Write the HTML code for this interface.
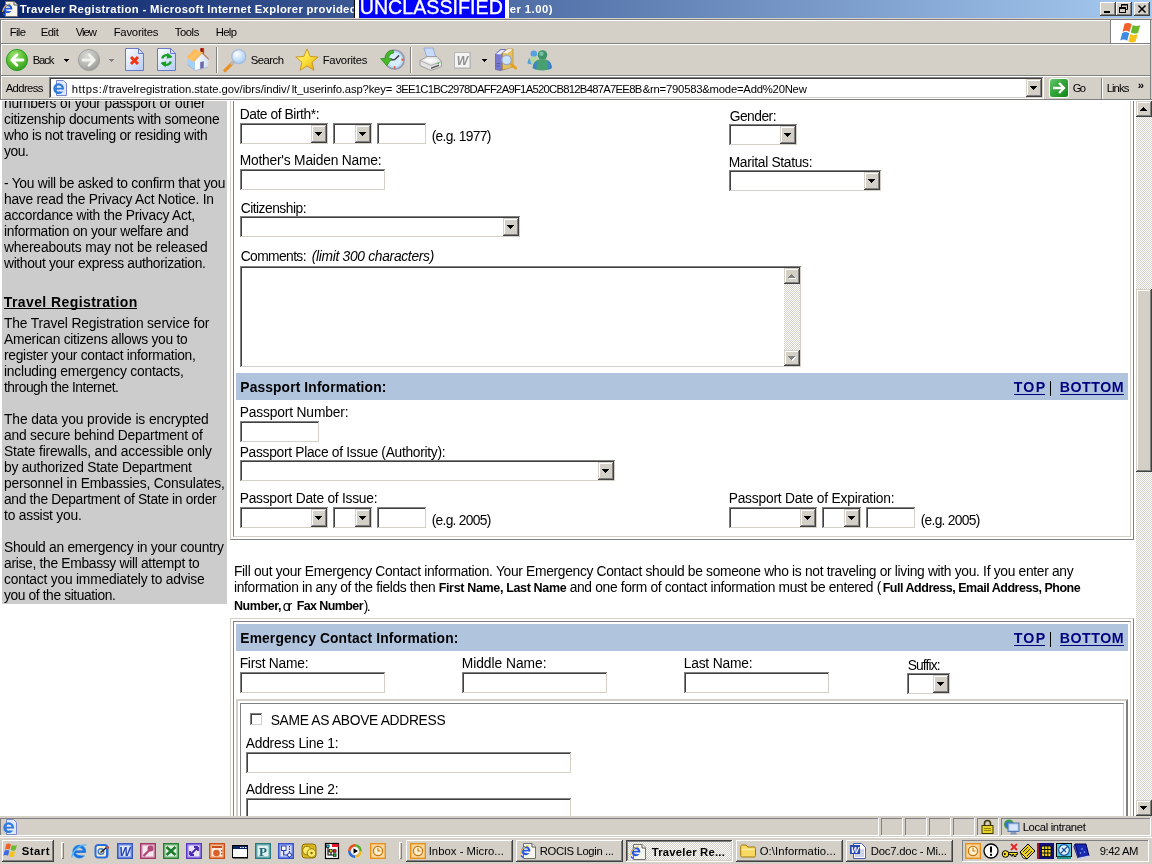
<!DOCTYPE html>
<html>
<head>
<meta charset="utf-8">
<title>Traveler Registration</title>
<style>
*{box-sizing:border-box;margin:0;padding:0}
html,body{width:1152px;height:864px;overflow:hidden;background:#fff}
body{font-family:"Liberation Sans",sans-serif;font-size:13.33px;color:#000;position:relative}
#root{position:absolute;left:0;top:0;width:1152px;height:864px;overflow:hidden;will-change:transform}
.a{position:absolute;display:block}
.t{position:absolute;white-space:nowrap;font-family:"Liberation Sans",sans-serif}
svg{overflow:visible}
.inp{background:#fff;box-shadow:inset -1px -1px 0 #fff,inset 1px 1px 0 #808080,inset -2px -2px 0 #d4d0c8,inset 2px 2px 0 #404040}
.btn{background:#d4d0c8;box-shadow:inset -1px -1px 0 #404040,inset 1px 1px 0 #d4d0c8,inset -2px -2px 0 #808080,inset 2px 2px 0 #fff}
.btnw{background:#d4d0c8;box-shadow:inset -1px -1px 0 #404040,inset 1px 1px 0 #fff,inset -2px -2px 0 #808080,inset 2px 2px 0 #d4d0c8}
.sunk{box-shadow:inset -1px -1px 0 #fff,inset 1px 1px 0 #808080}
.chk{background-color:#fff;background-image:linear-gradient(45deg,#d4d0c8 25%,transparent 25%,transparent 75%,#d4d0c8 75%),linear-gradient(45deg,#d4d0c8 25%,transparent 25%,transparent 75%,#d4d0c8 75%);background-size:2px 2px;background-position:0 0,1px 1px}

</style>
</head>
<body>
<div id="root">
<!-- title bar -->
<div class="a" style="left:0px;top:0px;width:1152px;height:18px;background:linear-gradient(90deg,#0a246a,#a6caf0)"></div>
<svg class="a" style="left:2px;top:1px" width="16" height="16" viewBox="0 0 16 16"><path d="M3.500 .5h8.500l3.500 3.500v11.500h-12z" fill="#f6f6ec" stroke="#707070"/><path d="M12 .5v3.500h3.500" fill="#fff" stroke="#505050"/>
<circle cx="5.800" cy="7.600" r="3.500" fill="none" stroke="#2456e0" stroke-width="2.100"/><rect x="2.300" y="6.800" width="7.500" height="1.700" fill="#2456e0"/><rect x="6.500" y="8.500" width="4" height="1.700" fill="#f6f6ec"/>
<path d="M.6 11c.3-4 3.600-8 8-8.500" fill="none" stroke="#f0c040" stroke-width="1.100"/><path d="M1 12.500l2 2" stroke="#2456e0" stroke-width="1.200"/></svg>
<div class="t" style="left:19.70px;top:1px;font-size:11.3px;line-height:16px;letter-spacing:0.327px;font-weight:bold;color:#fff;">Traveler Registration - Microsoft Internet Explorer provided</div>
<div class="t" style="left:509.70px;top:1px;font-size:11.3px;line-height:16px;letter-spacing:0.456px;font-weight:bold;color:#fff;">er 1.00)</div>
<div class="a" style="left:354px;top:0px;width:155px;height:20px;background:#00f;border-left:1px solid #000;border-bottom:1px solid #000;box-shadow:inset 4px 0 0 #fff,inset -4px 0 0 #fff;overflow:hidden"></div>
<div class="t" style="left:359.70px;top:-3px;font-size:19.6px;line-height:20px;letter-spacing:0.047px;color:#fff;-webkit-text-stroke:.35px #fff">UNCLASSIFIED</div>
<div class="a btnw" style="left:1100px;top:2px;width:16px;height:14px;"></div>
<div class="a btnw" style="left:1116px;top:2px;width:16px;height:14px;"></div>
<div class="a btnw" style="left:1134px;top:2px;width:16px;height:14px;"></div>
<div class="a" style="left:1104px;top:11px;width:6px;height:2px;background:#000"></div>
<svg class="a" style="left:1116px;top:2px" width="16" height="14" viewBox="0 0 16 14"><path d="M5.5 2.5h6v5h-6z M5 3h7 M3.5 5.5h6v5h-6z M3 6h7" fill="none" stroke="#000" stroke-width="1"/><rect x="4" y="6" width="5" height="4" fill="#d4d0c8"/><path d="M3.5 5.5h6v5h-6z M3 6.5h7" fill="none" stroke="#000"/></svg>
<svg class="a" style="left:1134px;top:2px" width="16" height="14" viewBox="0 0 16 14"><path d="M4.5 3.5l7 7 M11.5 3.5l-7 7" stroke="#000" stroke-width="1.5" fill="none"/></svg>
<!-- menu / toolbar / address -->
<div class="a" style="left:0px;top:18px;width:1152px;height:82px;background:#d4d0c8"></div>
<div class="a" style="left:0px;top:19px;width:1px;height:81px;background:#808080"></div>
<div class="a" style="left:1px;top:20px;width:1px;height:79px;background:#fff"></div>
<div class="a" style="left:1150px;top:19px;width:1px;height:81px;background:#808080"></div>
<div class="a" style="left:0px;top:19px;width:1152px;height:1px;background:#808080"></div>
<div class="a" style="left:1px;top:20px;width:1149px;height:1px;background:#fff"></div>
<div class="a" style="left:1px;top:43px;width:1150px;height:1px;background:#808080"></div>
<div class="a" style="left:1px;top:44px;width:1149px;height:1px;background:#fff"></div>
<div class="a" style="left:1px;top:75px;width:1150px;height:1px;background:#808080"></div>
<div class="a" style="left:1px;top:76px;width:1149px;height:1px;background:#fff"></div>
<div class="a" style="left:0px;top:99px;width:1152px;height:1px;background:#808080"></div>
<div class="t" style="left:9.70px;top:24px;font-size:11.3px;line-height:16px;letter-spacing:-0.640px;">File</div>
<div class="t" style="left:40.70px;top:24px;font-size:11.3px;line-height:16px;letter-spacing:-0.443px;">Edit</div>
<div class="t" style="left:75.70px;top:24px;font-size:11.3px;line-height:16px;letter-spacing:-1.041px;">View</div>
<div class="t" style="left:113.70px;top:24px;font-size:11.3px;line-height:16px;letter-spacing:-0.226px;">Favorites</div>
<div class="t" style="left:174.70px;top:24px;font-size:11.3px;line-height:16px;letter-spacing:-0.431px;">Tools</div>
<div class="t" style="left:215.70px;top:24px;font-size:11.3px;line-height:16px;letter-spacing:-0.650px;">Help</div>
<div class="a" style="left:1110px;top:20px;width:1px;height:24px;background:#808080"></div>
<div class="a" style="left:1111px;top:20px;width:39px;height:23px;background:#fff"></div>
<svg class="a" style="left:1121px;top:22px" width="21" height="20" viewBox="0 0 19 18"><path d="M3.2 1.6c2.2-1.3 4.6-.9 6.4.4l-1.9 7c-1.9-1.3-4-1.5-6.3-.3z" fill="#f0622a"/>
<path d="M10.6 2.6c2 1.2 4.300 1.500 6.800.000l-1.900 7.000c-2.400 1.300-4.700 1.000-6.700-.200z" fill="#6cb82c"/>
<path d="M1.100 9.800c2.200-1.200 4.400-.900 6.300.300l-1.800 6.800c-1.900-1.300-4.100-1.500-6.300-.300z" fill="#3d8be0"/>
<path d="M8.500 10.800c2.000 1.200 4.200 1.400 6.600.100l-1.800 6.800c-2.300 1.200-4.600 1.000-6.600-.200z" fill="#f7c21a"/></svg>
<!-- toolbar -->
<svg class="a" style="left:6px;top:49px" width="22" height="22" viewBox="0 0 22 22"><defs><radialGradient id="gb" cx=".4" cy=".3" r=".8"><stop offset="0" stop-color="#a4e478"/><stop offset=".55" stop-color="#58bc30"/><stop offset="1" stop-color="#2c9420"/></radialGradient>
<radialGradient id="gf" cx=".4" cy=".3" r=".8"><stop offset="0" stop-color="#d8d8d4"/><stop offset=".6" stop-color="#b4b4b0"/><stop offset="1" stop-color="#8e8e8a"/></radialGradient></defs>
<circle cx="11" cy="11" r="10.6" fill="url(#gb)" stroke="#1c9c1c" stroke-width=".9"/>
<path d="M17 11H6.500M11 5.800L5.800 11l5.200 5.200" fill="none" stroke="#fff" stroke-width="2.800" stroke-linecap="round" stroke-linejoin="round"/></svg>
<div class="t" style="left:32.70px;top:52px;font-size:11.3px;line-height:16px;letter-spacing:-1.155px;">Back</div>
<div class="a" style="left:64px;top:59px;width:5px;height:1px;background:#000"></div>
<div class="a" style="left:65px;top:60px;width:3px;height:1px;background:#000"></div>
<div class="a" style="left:66px;top:61px;width:1px;height:1px;background:#000"></div>
<svg class="a" style="left:78px;top:49px" width="22" height="22" viewBox="0 0 22 22"><circle cx="11" cy="11" r="10.6" fill="url(#gf)" stroke="#98989a" stroke-width=".8"/>
<path d="M5 11h10.500M11 5.800l5.200 5.200-5.200 5.200" fill="none" stroke="#f2f2ee" stroke-width="2.800" stroke-linecap="round" stroke-linejoin="round"/></svg>
<div class="a" style="left:109px;top:59px;width:5px;height:1px;background:#808080"></div>
<div class="a" style="left:110px;top:60px;width:3px;height:1px;background:#808080"></div>
<div class="a" style="left:111px;top:61px;width:1px;height:1px;background:#808080"></div>
<svg class="a" style="left:125px;top:48px" width="19" height="23" viewBox="0 0 19 23"><defs><linearGradient id="pg" x1="0" y1="0" x2="1" y2="1"><stop offset="0" stop-color="#fff"/><stop offset="1" stop-color="#b4ccf4"/></linearGradient></defs>
<path d="M.5 .5h13l5 5v17h-18z" fill="url(#pg)" stroke="#6a78c8" stroke-width="1"/><path d="M13.500 .5v5h5z" fill="#d8e4fb" stroke="#6a78c8" stroke-width="1"/><path d="M6 9l7 7M13 9l-7 7" stroke="#f03410" stroke-width="3" fill="none"/></svg>
<svg class="a" style="left:157px;top:48px" width="19" height="23" viewBox="0 0 19 23"><path d="M.5 .5h13l5 5v17h-18z" fill="url(#pg)" stroke="#6a78c8" stroke-width="1"/><path d="M13.500 .5v5h5z" fill="#d8e4fb" stroke="#6a78c8" stroke-width="1"/>
<path d="M13.800 9.800A4.600 4.600 0 0 0 5.200 10.500" fill="none" stroke="#18a028" stroke-width="2.400"/><path d="M10.500 4.800l4.800 4.200-5.600 1.800z" fill="#18a028"/>
<path d="M5.200 14.200a4.600 4.600 0 0 0 8.600-.7" fill="none" stroke="#18a028" stroke-width="2.400"/><path d="M8.500 19.200l-4.800-4.200 5.600-1.800z" fill="#18a028"/></svg>
<svg class="a" style="left:184px;top:45px" width="30" height="28" viewBox="0 0 30 28"><defs><linearGradient id="rf" x1="0" y1="0" x2="1" y2="1"><stop offset="0" stop-color="#ffa63c"/><stop offset=".5" stop-color="#ffc468"/><stop offset="1" stop-color="#ff9a28"/></linearGradient>
<linearGradient id="fw" x1="0" y1="0" x2="1" y2="0"><stop offset="0" stop-color="#fff"/><stop offset="1" stop-color="#cfe2f4"/></linearGradient></defs>
<rect x="16.400" y="3" width="3.700" height="6" rx=".8" fill="#c03414"/><rect x="16.600" y="3.200" width="1.600" height="4" fill="#900808"/>
<path d="M3 12.800l6.200 4 2 -.3.200 9-8.200-6z" fill="#a4d0f8"/>
<path d="M11 16.500l7.500-8 5.900 5.600-.3 8-12.800 3.500z" fill="url(#fw)"/>
<path d="M18.700 7.600l6.500 6.300-.8.900-6.200-6z" fill="#b87a58"/>
<path d="M2.500 12.300l8-8.100 8.700 3.400-10 9.200z" fill="url(#rf)"/>
<path d="M16.200 17l3.600-.7v6.700l-3.600 1z" fill="#6c6cac"/>
<path d="M3.200 19.600l8.100 6 12.800-3.500" fill="none" stroke="#9aa8d8" stroke-width=".7"/></svg>
<div class="a" style="left:216px;top:47px;width:1px;height:26px;background:#808080"></div>
<div class="a" style="left:217px;top:47px;width:1px;height:26px;background:#fff"></div>
<svg class="a" style="left:222px;top:48px" width="26" height="24" viewBox="0 0 26 24"><path d="M11 14.500L3 22.500" stroke="#e8922c" stroke-width="3.400" stroke-linecap="round"/><path d="M11.500 14L9 16.500" stroke="#b8b8c0" stroke-width="3"/>
<defs><radialGradient id="gl" cx=".35" cy=".3" r=".8"><stop offset="0" stop-color="#fff"/><stop offset="1" stop-color="#9cc8f4"/></radialGradient></defs>
<circle cx="16.800" cy="8.600" r="7" fill="url(#gl)" stroke="#a4b8dc" stroke-width="1.300"/></svg>
<div class="t" style="left:250.70px;top:52px;font-size:11.3px;line-height:16px;letter-spacing:-0.502px;">Search</div>
<svg class="a" style="left:295px;top:48px" width="24" height="23" viewBox="0 0 24 23"><defs><linearGradient id="st" x1="0" y1="0" x2="1" y2="1"><stop offset="0" stop-color="#fff8a0"/><stop offset=".5" stop-color="#fbe23a"/><stop offset="1" stop-color="#e0a010"/></linearGradient></defs>
<path d="M12 .8l3.100 7.600 8.100.6-6.200 5.300 2 8-7-4.400-7 4.400 2-8L.8 9l8.100-.6z" fill="url(#st)" stroke="#c89418" stroke-width=".9" stroke-linejoin="round"/></svg>
<div class="t" style="left:322.70px;top:52px;font-size:11.3px;line-height:16px;letter-spacing:-0.226px;">Favorites</div>
<svg class="a" style="left:380px;top:48px" width="26" height="23" viewBox="0 0 26 23"><circle cx="14.600" cy="11.700" r="9.400" fill="#d8eefc" stroke="#9a9ab4" stroke-width="2"/><circle cx="14.600" cy="11.700" r="7.600" fill="none" stroke="#b8e0f8" stroke-width="1.500"/>
<path d="M14.600 11.700l4.500-4.300M14.600 11.700h-4" stroke="#404048" stroke-width="1.500" fill="none"/><rect x="21.500" y="10.700" width="1.800" height="2" fill="#e85020"/><rect x="13.700" y="18.300" width="1.800" height="2" fill="#e85020"/>
<path d="M13.500 2.200C8 2 5 6.500 5.500 10.500H.5l6.200 7.200 5.300-7.200H8.800c0-3 1.700-5.300 4.700-5.300z" fill="#48b828" stroke="#2a8a1a" stroke-width=".7"/></svg>
<div class="a" style="left:410px;top:47px;width:1px;height:26px;background:#808080"></div>
<div class="a" style="left:411px;top:47px;width:1px;height:26px;background:#fff"></div>
<svg class="a" style="left:419px;top:47px" width="23" height="24" viewBox="0 0 23 24"><path d="M5 1h9l3 10H8z" fill="#c8dcfa" stroke="#8aa0d8" stroke-width=".8"/><path d="M1 13.500l7-4h10l4.500 5v5L12 23.500 1 18.500z" fill="#e4e4e4" stroke="#909090" stroke-width=".8"/>
<path d="M1 13.500l11 5 10.500-4" fill="none" stroke="#a0a0a0" stroke-width=".8"/><path d="M7 11.500h9l2.500 2.500-6.500 2.500-7-3z" fill="#f8f8f8"/><path d="M12 20.500l8-3v1.500l-8 3z" fill="#505050"/><rect x="18.500" y="15.800" width="1.500" height="1.200" fill="#38c030"/></svg>
<div class="a" style="left:454px;top:52px;width:17px;height:17px;background:#f4f4f4;border:1px solid #b8b8b8;box-shadow:inset -1px -1px 0 #d0d0d0"></div>
<div class="t" style="left:456.70px;top:53px;font-size:12px;line-height:16px;font-weight:bold;font-style:italic;color:#909090;">W</div>
<div class="a" style="left:482px;top:59px;width:5px;height:1px;background:#000"></div>
<div class="a" style="left:483px;top:60px;width:3px;height:1px;background:#000"></div>
<div class="a" style="left:484px;top:61px;width:1px;height:1px;background:#000"></div>
<svg class="a" style="left:495px;top:48px" width="22" height="23" viewBox="0 0 22 23"><path d="M0.500 6l5-4.500 5 0V21l-5 1.500-5-1z" fill="#7878d0" stroke="#5050a0" stroke-width=".6"/><path d="M1 6l5-4h4l-4.500 4.500z" fill="#e8e8f8"/><path d="M1.500 18h3.500M1.500 15.500h3.500" stroke="#5050a0" stroke-width=".8"/>
<path d="M7.500 5l5-4h5.500V19l-10.500 3z" fill="#e4c060" stroke="#a88830" stroke-width=".6"/><path d="M8 5l5-3.700 4.500 0-5 4z" fill="#f4f4f4"/>
<path d="M15 15l5.500 5" stroke="#e8a020" stroke-width="3" stroke-linecap="round"/><circle cx="11.600" cy="12" r="4.700" fill="#c8e4fa" stroke="#a0a8c0" stroke-width="1.300"/></svg>
<svg class="a" style="left:527px;top:49px" width="25" height="22" viewBox="0 0 25 22"><circle cx="6.800" cy="4.800" r="3.300" fill="#5aa0e0"/><path d="M.5 14.500c.5-5 3-7 6.300-7s5.500 2 6 7c-3 1.800-9 1.800-12.300 0z" fill="#b8d4a0"/><path d="M.5 14.500c.2-3 1-4.500 2-5.500l2 6.500z" fill="#5aa0e0"/>
<circle cx="15.500" cy="6" r="4.800" fill="#3c9468"/><circle cx="14.500" cy="4.800" r="2.200" fill="#78c0a0"/><path d="M5.500 19c.5-6 4.500-9 10-9s9 3 9.500 9c-4 3.300-15 3.300-19.500 0z" fill="#48a070"/><path d="M21 11.500c2.200 1.500 3.500 4 3.800 7.500l-3.500 1.700z" fill="#3c80d0"/><path d="M10 11.500c-2.200 1.500-3.800 4-4.200 7.500l3.500 1.700z" fill="#3c80d0"/></svg>
<!-- address bar -->
<div class="t" style="left:5.70px;top:80px;font-size:11.3px;line-height:16px;letter-spacing:-0.632px;">Address</div>
<div class="a inp" style="left:49px;top:77px;width:995px;height:22px;"></div>
<svg class="a" style="left:52px;top:80px" width="16" height="16" viewBox="0 0 16 16"><path d="M4.500 .5h7l3 3v12h-10z" fill="#dfe7fb" stroke="#7a86c8" stroke-width="1"/>
<circle cx="6.600" cy="8.600" r="4.200" fill="none" stroke="#2a7ae0" stroke-width="2.300"/><rect x="3" y="7.800" width="8.500" height="1.800" fill="#2a7ae0"/><rect x="8" y="9.600" width="4" height="2" fill="#dfe7fb"/></svg>
<div class="t" style="left:71.70px;top:81px;font-size:11.3px;line-height:16px;letter-spacing:0.502px;">https:</div>
<div class="t" style="left:102.70px;top:81px;font-size:11.3px;line-height:16px;letter-spacing:-1.139px;">//</div>
<div class="t" style="left:108.70px;top:81px;font-size:11.3px;line-height:16px;letter-spacing:-0.057px;">travelregistration.state.gov/ibrs/indiv/</div>
<div class="t" style="left:291.70px;top:81px;font-size:11.3px;line-height:16px;letter-spacing:-0.176px;">lt_userinfo.asp?key=</div>
<div class="t" style="left:395.70px;top:81px;font-size:11.3px;line-height:16px;letter-spacing:-0.748px;">3EE1C1BC2978DAFF2A9F1A520CB812B487A7EE8B</div>
<div class="t" style="left:642.70px;top:81px;font-size:11.3px;line-height:16px;letter-spacing:-0.226px;">&amp;rn=790583&amp;mode=Add%20New</div>
<div class="a btn" style="left:1026px;top:79px;width:16px;height:18px;"></div>
<div class="a" style="left:1030px;top:86px;width:7px;height:1px;background:#000"></div>
<div class="a" style="left:1031px;top:87px;width:5px;height:1px;background:#000"></div>
<div class="a" style="left:1032px;top:88px;width:3px;height:1px;background:#000"></div>
<div class="a" style="left:1033px;top:89px;width:1px;height:1px;background:#000"></div>
<svg class="a" style="left:1049px;top:78px" width="20" height="20" viewBox="0 0 20 20"><defs><linearGradient id="go" x1="0" y1="0" x2="1" y2="1"><stop offset="0" stop-color="#6cc870"/><stop offset=".4" stop-color="#38a840"/><stop offset="1" stop-color="#108818"/></linearGradient></defs>
<rect x="0" y="0" width="20" height="20" rx="3" fill="#f4f8f0"/><rect x="1" y="1" width="18" height="18" rx="2.500" fill="url(#go)"/><path d="M4 10h10.500M10 5l5 5-5 5" fill="none" stroke="#fff" stroke-width="2.300"/></svg>
<div class="t" style="left:1072.70px;top:80px;font-size:11.3px;line-height:16px;letter-spacing:-1.787px;">Go</div>
<div class="a" style="left:1101px;top:78px;width:1px;height:21px;background:#808080"></div>
<div class="a" style="left:1102px;top:78px;width:1px;height:21px;background:#fff"></div>
<div class="t" style="left:1106.70px;top:80px;font-size:11.3px;line-height:16px;letter-spacing:-0.931px;">Links</div>
<div class="t" style="left:1137.70px;top:77px;font-size:11.3px;line-height:16px;font-weight:bold;">»</div>
<!-- page viewport -->
<div class="a" style="left:0;top:101px;width:1136px;height:715px;overflow:hidden;background:#fff"><div class="a" style="left:0;top:-101px;width:1136px;height:900px">
<div class="a" style="left:2px;top:101px;width:225px;height:503px;background:#ccc"></div>
<div class="t" style="left:4.00px;top:96px;font-size:13.8px;line-height:16px;letter-spacing:-0.195px;">numbers of your passport or other</div>
<div class="t" style="left:4.00px;top:112px;font-size:13.8px;line-height:16px;letter-spacing:-0.273px;">citizenship documents with someone</div>
<div class="t" style="left:4.00px;top:128px;font-size:13.8px;line-height:16px;letter-spacing:-0.307px;">who is not traveling or residing with</div>
<div class="t" style="left:4.00px;top:144px;font-size:13.8px;line-height:16px;letter-spacing:-0.415px;">you.</div>
<div class="t" style="left:4.00px;top:176px;font-size:13.8px;line-height:16px;letter-spacing:-0.268px;">- You will be asked to confirm that you</div>
<div class="t" style="left:4.00px;top:192px;font-size:13.8px;line-height:16px;letter-spacing:-0.247px;">have read the Privacy Act Notice. In</div>
<div class="t" style="left:4.00px;top:208px;font-size:13.8px;line-height:16px;letter-spacing:-0.243px;">accordance with the Privacy Act,</div>
<div class="t" style="left:4.00px;top:224px;font-size:13.8px;line-height:16px;letter-spacing:-0.286px;">information on your welfare and</div>
<div class="t" style="left:4.00px;top:240px;font-size:13.8px;line-height:16px;letter-spacing:-0.139px;">whereabouts may not be released</div>
<div class="t" style="left:4.00px;top:256px;font-size:13.8px;line-height:16px;letter-spacing:-0.334px;">without your express authorization.</div>
<div class="t" style="left:4.00px;top:316px;font-size:13.8px;line-height:16px;letter-spacing:-0.140px;">The Travel Registration service for</div>
<div class="t" style="left:4.00px;top:332px;font-size:13.8px;line-height:16px;letter-spacing:-0.268px;">American citizens allows you to</div>
<div class="t" style="left:4.00px;top:348px;font-size:13.8px;line-height:16px;letter-spacing:-0.275px;">register your contact information,</div>
<div class="t" style="left:4.00px;top:364px;font-size:13.8px;line-height:16px;letter-spacing:-0.206px;">including emergency contacts,</div>
<div class="t" style="left:4.00px;top:380px;font-size:13.8px;line-height:16px;letter-spacing:-0.471px;">through the Internet.</div>
<div class="t" style="left:4.00px;top:412px;font-size:13.8px;line-height:16px;letter-spacing:-0.099px;">The data you provide is encrypted</div>
<div class="t" style="left:4.00px;top:428px;font-size:13.8px;line-height:16px;letter-spacing:-0.198px;">and secure behind Department of</div>
<div class="t" style="left:4.00px;top:444px;font-size:13.8px;line-height:16px;letter-spacing:-0.173px;">State firewalls, and accessible only</div>
<div class="t" style="left:4.00px;top:460px;font-size:13.8px;line-height:16px;letter-spacing:-0.240px;">by authorized State Department</div>
<div class="t" style="left:4.00px;top:476px;font-size:13.8px;line-height:16px;letter-spacing:-0.181px;">personnel in Embassies, Consulates,</div>
<div class="t" style="left:4.00px;top:492px;font-size:13.8px;line-height:16px;letter-spacing:-0.324px;">and the Department of State in order</div>
<div class="t" style="left:4.00px;top:508px;font-size:13.8px;line-height:16px;letter-spacing:-0.207px;">to assist you.</div>
<div class="t" style="left:4.00px;top:540px;font-size:13.8px;line-height:16px;letter-spacing:-0.254px;">Should an emergency in your country</div>
<div class="t" style="left:4.00px;top:556px;font-size:13.8px;line-height:16px;letter-spacing:-0.298px;">arise, the Embassy will attempt to</div>
<div class="t" style="left:4.00px;top:572px;font-size:13.8px;line-height:16px;letter-spacing:-0.199px;">contact you immediately to advise</div>
<div class="t" style="left:4.00px;top:588px;font-size:13.8px;line-height:16px;letter-spacing:-0.391px;">you of the situation.</div>
<div class="t" style="left:3.70px;top:293px;font-size:14px;line-height:18px;letter-spacing:0.417px;font-weight:bold;">Travel Registration</div>
<div class="a" style="left:4px;top:308px;width:133px;height:1px;background:#000"></div>
<div class="a" style="left:230px;top:60px;width:904px;height:480px;border:1px solid;border-color:#d4d0c8 #808080 #808080 #d4d0c8"></div>
<div class="a" style="left:233px;top:63px;width:898px;height:474px;border:1px solid;border-color:#808080 #d4d0c8 #d4d0c8 #808080"></div>
<div class="t" style="left:239.70px;top:107px;font-size:13.8px;line-height:16px;letter-spacing:-0.432px;">Date of Birth*:</div>
<div class="a inp" style="left:240px;top:123px;width:89px;height:22px;"></div>
<div class="a btn" style="left:311px;top:125px;width:16px;height:18px;"></div>
<div class="a" style="left:315px;top:132px;width:7px;height:1px;background:#000"></div>
<div class="a" style="left:316px;top:133px;width:5px;height:1px;background:#000"></div>
<div class="a" style="left:317px;top:134px;width:3px;height:1px;background:#000"></div>
<div class="a" style="left:318px;top:135px;width:1px;height:1px;background:#000"></div>
<div class="a inp" style="left:333px;top:123px;width:40px;height:22px;"></div>
<div class="a btn" style="left:355px;top:125px;width:16px;height:18px;"></div>
<div class="a" style="left:359px;top:132px;width:7px;height:1px;background:#000"></div>
<div class="a" style="left:360px;top:133px;width:5px;height:1px;background:#000"></div>
<div class="a" style="left:361px;top:134px;width:3px;height:1px;background:#000"></div>
<div class="a" style="left:362px;top:135px;width:1px;height:1px;background:#000"></div>
<div class="a inp" style="left:377px;top:123px;width:50px;height:22px;"></div>
<div class="t" style="left:431.70px;top:129px;font-size:13.8px;line-height:16px;letter-spacing:-0.713px;">(e.g. 1977)</div>
<div class="t" style="left:729.70px;top:109px;font-size:13.8px;line-height:16px;letter-spacing:-0.503px;">Gender:</div>
<div class="a inp" style="left:729px;top:124px;width:69px;height:22px;"></div>
<div class="a btn" style="left:780px;top:126px;width:16px;height:18px;"></div>
<div class="a" style="left:784px;top:133px;width:7px;height:1px;background:#000"></div>
<div class="a" style="left:785px;top:134px;width:5px;height:1px;background:#000"></div>
<div class="a" style="left:786px;top:135px;width:3px;height:1px;background:#000"></div>
<div class="a" style="left:787px;top:136px;width:1px;height:1px;background:#000"></div>
<div class="t" style="left:239.70px;top:153px;font-size:13.8px;line-height:16px;letter-spacing:-0.210px;">Mother&#x27;s Maiden Name:</div>
<div class="a inp" style="left:240px;top:169px;width:146px;height:22px;"></div>
<div class="t" style="left:728.70px;top:155px;font-size:13.8px;line-height:16px;letter-spacing:-0.310px;">Marital Status:</div>
<div class="a inp" style="left:729px;top:170px;width:153px;height:22px;"></div>
<div class="a btn" style="left:864px;top:172px;width:16px;height:18px;"></div>
<div class="a" style="left:868px;top:179px;width:7px;height:1px;background:#000"></div>
<div class="a" style="left:869px;top:180px;width:5px;height:1px;background:#000"></div>
<div class="a" style="left:870px;top:181px;width:3px;height:1px;background:#000"></div>
<div class="a" style="left:871px;top:182px;width:1px;height:1px;background:#000"></div>
<div class="t" style="left:240.70px;top:201px;font-size:13.8px;line-height:16px;letter-spacing:-0.498px;">Citizenship:</div>
<div class="a inp" style="left:240px;top:216px;width:281px;height:22px;"></div>
<div class="a btn" style="left:503px;top:218px;width:16px;height:18px;"></div>
<div class="a" style="left:507px;top:225px;width:7px;height:1px;background:#000"></div>
<div class="a" style="left:508px;top:226px;width:5px;height:1px;background:#000"></div>
<div class="a" style="left:509px;top:227px;width:3px;height:1px;background:#000"></div>
<div class="a" style="left:510px;top:228px;width:1px;height:1px;background:#000"></div>
<div class="t" style="left:240.70px;top:249px;font-size:13.8px;line-height:16px;letter-spacing:-0.588px;">Comments:</div>
<div class="t" style="left:311.70px;top:249px;font-size:13.8px;line-height:16px;letter-spacing:-0.296px;font-style:italic;">(limit 300 characters)</div>
<div class="a inp" style="left:240px;top:266px;width:562px;height:102px;"></div>
<div class="a chk" style="left:784px;top:268px;width:16px;height:98px;"></div>
<div class="a btn" style="left:784px;top:268px;width:16px;height:16px;"></div>
<div class="a btn" style="left:784px;top:350px;width:16px;height:16px;"></div>
<div class="a" style="left:789px;top:278px;width:7px;height:1px;background:#fff"></div>
<div class="a" style="left:790px;top:277px;width:5px;height:1px;background:#fff"></div>
<div class="a" style="left:791px;top:276px;width:3px;height:1px;background:#fff"></div>
<div class="a" style="left:792px;top:275px;width:1px;height:1px;background:#fff"></div>
<div class="a" style="left:788px;top:277px;width:7px;height:1px;background:#808080"></div>
<div class="a" style="left:789px;top:276px;width:5px;height:1px;background:#808080"></div>
<div class="a" style="left:790px;top:275px;width:3px;height:1px;background:#808080"></div>
<div class="a" style="left:791px;top:274px;width:1px;height:1px;background:#808080"></div>
<div class="a" style="left:789px;top:357px;width:7px;height:1px;background:#fff"></div>
<div class="a" style="left:790px;top:358px;width:5px;height:1px;background:#fff"></div>
<div class="a" style="left:791px;top:359px;width:3px;height:1px;background:#fff"></div>
<div class="a" style="left:792px;top:360px;width:1px;height:1px;background:#fff"></div>
<div class="a" style="left:788px;top:356px;width:7px;height:1px;background:#808080"></div>
<div class="a" style="left:789px;top:357px;width:5px;height:1px;background:#808080"></div>
<div class="a" style="left:790px;top:358px;width:3px;height:1px;background:#808080"></div>
<div class="a" style="left:791px;top:359px;width:1px;height:1px;background:#808080"></div>
<div class="a" style="left:236px;top:373px;width:892px;height:27px;background:#b0c4de"></div>
<div class="t" style="left:240.30px;top:380px;font-size:13.8px;line-height:16px;letter-spacing:0.132px;font-weight:bold;">Passport Information:</div>
<div class="t" style="left:1013.70px;top:379px;font-size:14.2px;line-height:16px;letter-spacing:1.277px;font-weight:bold;color:#000080;">TOP</div>
<div class="a" style="left:1014px;top:394px;width:31px;height:1px;background:#000080"></div>
<div class="a" style="left:1050px;top:381px;width:1px;height:15px;background:#000"></div>
<div class="t" style="left:1059.70px;top:379px;font-size:14.2px;line-height:16px;letter-spacing:0.521px;font-weight:bold;color:#000080;">BOTTOM</div>
<div class="a" style="left:1060px;top:394px;width:64px;height:1px;background:#000080"></div>
<div class="t" style="left:239.70px;top:405px;font-size:13.8px;line-height:16px;letter-spacing:-0.157px;">Passport Number:</div>
<div class="a inp" style="left:240px;top:421px;width:80px;height:22px;"></div>
<div class="t" style="left:239.70px;top:445px;font-size:13.8px;line-height:16px;letter-spacing:-0.297px;">Passport Place of Issue (Authority):</div>
<div class="a inp" style="left:240px;top:460px;width:376px;height:22px;"></div>
<div class="a btn" style="left:598px;top:462px;width:16px;height:18px;"></div>
<div class="a" style="left:602px;top:469px;width:7px;height:1px;background:#000"></div>
<div class="a" style="left:603px;top:470px;width:5px;height:1px;background:#000"></div>
<div class="a" style="left:604px;top:471px;width:3px;height:1px;background:#000"></div>
<div class="a" style="left:605px;top:472px;width:1px;height:1px;background:#000"></div>
<div class="t" style="left:239.70px;top:491px;font-size:13.8px;line-height:16px;letter-spacing:-0.253px;">Passport Date of Issue:</div>
<div class="a inp" style="left:240px;top:507px;width:89px;height:22px;"></div>
<div class="a btn" style="left:311px;top:509px;width:16px;height:18px;"></div>
<div class="a" style="left:315px;top:516px;width:7px;height:1px;background:#000"></div>
<div class="a" style="left:316px;top:517px;width:5px;height:1px;background:#000"></div>
<div class="a" style="left:317px;top:518px;width:3px;height:1px;background:#000"></div>
<div class="a" style="left:318px;top:519px;width:1px;height:1px;background:#000"></div>
<div class="a inp" style="left:333px;top:507px;width:40px;height:22px;"></div>
<div class="a btn" style="left:355px;top:509px;width:16px;height:18px;"></div>
<div class="a" style="left:359px;top:516px;width:7px;height:1px;background:#000"></div>
<div class="a" style="left:360px;top:517px;width:5px;height:1px;background:#000"></div>
<div class="a" style="left:361px;top:518px;width:3px;height:1px;background:#000"></div>
<div class="a" style="left:362px;top:519px;width:1px;height:1px;background:#000"></div>
<div class="a inp" style="left:377px;top:507px;width:50px;height:22px;"></div>
<div class="t" style="left:431.70px;top:513px;font-size:13.8px;line-height:16px;letter-spacing:-0.713px;">(e.g. 2005)</div>
<div class="t" style="left:728.70px;top:491px;font-size:13.8px;line-height:16px;letter-spacing:-0.220px;">Passport Date of Expiration:</div>
<div class="a inp" style="left:729px;top:507px;width:89px;height:22px;"></div>
<div class="a btn" style="left:800px;top:509px;width:16px;height:18px;"></div>
<div class="a" style="left:804px;top:516px;width:7px;height:1px;background:#000"></div>
<div class="a" style="left:805px;top:517px;width:5px;height:1px;background:#000"></div>
<div class="a" style="left:806px;top:518px;width:3px;height:1px;background:#000"></div>
<div class="a" style="left:807px;top:519px;width:1px;height:1px;background:#000"></div>
<div class="a inp" style="left:822px;top:507px;width:40px;height:22px;"></div>
<div class="a btn" style="left:844px;top:509px;width:16px;height:18px;"></div>
<div class="a" style="left:848px;top:516px;width:7px;height:1px;background:#000"></div>
<div class="a" style="left:849px;top:517px;width:5px;height:1px;background:#000"></div>
<div class="a" style="left:850px;top:518px;width:3px;height:1px;background:#000"></div>
<div class="a" style="left:851px;top:519px;width:1px;height:1px;background:#000"></div>
<div class="a inp" style="left:866px;top:507px;width:50px;height:22px;"></div>
<div class="t" style="left:920.70px;top:513px;font-size:13.8px;line-height:16px;letter-spacing:-0.713px;">(e.g. 2005)</div>
<div class="t" style="left:234.00px;top:564px;font-size:13.8px;line-height:16px;letter-spacing:-0.309px;">Fill out your Emergency Contact information. Your Emergency Contact should be someone who is not traveling or living with you. If you enter any</div>
<div class="t" style="left:234.00px;top:580px;font-size:13.8px;line-height:16px;letter-spacing:-0.342px;">information in any of the fields then</div>
<div class="t" style="left:438.70px;top:580px;font-size:12.5px;line-height:16px;letter-spacing:-0.341px;font-weight:bold;">First Name, Last Name</div>
<div class="t" style="left:569.70px;top:580px;font-size:13.8px;line-height:16px;letter-spacing:-0.335px;">and one form of contact information must be entered (</div>
<div class="t" style="left:882.70px;top:580px;font-size:12.5px;line-height:16px;letter-spacing:-0.475px;font-weight:bold;">Full Address, Email Address, Phone</div>
<div class="t" style="left:234.00px;top:598px;font-size:12.5px;line-height:16px;letter-spacing:-0.423px;font-weight:bold;">Number,</div>
<div class="t" style="left:282.70px;top:599px;font-size:13.8px;line-height:16px;letter-spacing:-2.673px;">or</div>
<div class="t" style="left:296.70px;top:598px;font-size:12.5px;line-height:16px;letter-spacing:-0.597px;font-weight:bold;">Fax Number</div>
<div class="t" style="left:363.70px;top:599px;font-size:13.8px;line-height:16px;letter-spacing:-1.594px;">).</div>
<div class="a" style="left:230px;top:618px;width:904px;height:300px;border:1px solid;border-color:#d4d0c8 #808080 #808080 #d4d0c8"></div>
<div class="a" style="left:233px;top:621px;width:898px;height:290px;border:1px solid;border-color:#808080 #d4d0c8 #d4d0c8 #808080"></div>
<div class="a" style="left:236px;top:624px;width:892px;height:27px;background:#b0c4de"></div>
<div class="t" style="left:240.30px;top:631px;font-size:13.8px;line-height:16px;letter-spacing:0.142px;font-weight:bold;">Emergency Contact Information:</div>
<div class="t" style="left:1013.70px;top:630px;font-size:14.2px;line-height:16px;letter-spacing:1.277px;font-weight:bold;color:#000080;">TOP</div>
<div class="a" style="left:1014px;top:645px;width:31px;height:1px;background:#000080"></div>
<div class="a" style="left:1050px;top:632px;width:1px;height:15px;background:#000"></div>
<div class="t" style="left:1059.70px;top:630px;font-size:14.2px;line-height:16px;letter-spacing:0.521px;font-weight:bold;color:#000080;">BOTTOM</div>
<div class="a" style="left:1060px;top:645px;width:64px;height:1px;background:#000080"></div>
<div class="t" style="left:239.70px;top:656px;font-size:13.8px;line-height:16px;letter-spacing:-0.246px;">First Name:</div>
<div class="t" style="left:461.70px;top:656px;font-size:13.8px;line-height:16px;letter-spacing:-0.025px;">Middle Name:</div>
<div class="t" style="left:683.70px;top:656px;font-size:13.8px;line-height:16px;letter-spacing:-0.190px;">Last Name:</div>
<div class="t" style="left:907.70px;top:658px;font-size:13.8px;line-height:16px;letter-spacing:-0.876px;">Suffix:</div>
<div class="a inp" style="left:240px;top:672px;width:146px;height:22px;"></div>
<div class="a inp" style="left:462px;top:672px;width:146px;height:22px;"></div>
<div class="a inp" style="left:684px;top:672px;width:146px;height:22px;"></div>
<div class="a inp" style="left:907px;top:673px;width:44px;height:22px;"></div>
<div class="a btn" style="left:933px;top:675px;width:16px;height:18px;"></div>
<div class="a" style="left:937px;top:682px;width:7px;height:1px;background:#000"></div>
<div class="a" style="left:938px;top:683px;width:5px;height:1px;background:#000"></div>
<div class="a" style="left:939px;top:684px;width:3px;height:1px;background:#000"></div>
<div class="a" style="left:940px;top:685px;width:1px;height:1px;background:#000"></div>
<div class="a" style="left:236px;top:699px;width:892px;height:200px;border:2px solid;border-color:#d4d0c8 #808080 #808080 #d4d0c8"></div>
<div class="a" style="left:240px;top:703px;width:884px;height:190px;border:1px solid;border-color:#808080 #d4d0c8 #d4d0c8 #808080"></div>
<div class="a inp" style="left:250px;top:713px;width:13px;height:13px;"></div>
<div class="t" style="left:270.70px;top:713px;font-size:13.8px;line-height:16px;letter-spacing:-0.302px;">SAME AS ABOVE ADDRESS</div>
<div class="t" style="left:245.70px;top:736px;font-size:13.8px;line-height:16px;letter-spacing:-0.217px;">Address Line 1:</div>
<div class="a inp" style="left:246px;top:752px;width:326px;height:22px;"></div>
<div class="t" style="left:245.70px;top:782px;font-size:13.8px;line-height:16px;letter-spacing:-0.217px;">Address Line 2:</div>
<div class="a inp" style="left:246px;top:798px;width:326px;height:22px;"></div>
</div></div>
<!-- page scrollbar -->
<div class="a chk" style="left:1136px;top:101px;width:16px;height:715px;"></div>
<div class="a btn" style="left:1136px;top:101px;width:16px;height:16px;"></div>
<div class="a btn" style="left:1136px;top:800px;width:16px;height:16px;"></div>
<div class="a btn" style="left:1136px;top:289px;width:16px;height:183px;"></div>
<div class="a" style="left:1140px;top:110px;width:7px;height:1px;background:#000"></div>
<div class="a" style="left:1141px;top:109px;width:5px;height:1px;background:#000"></div>
<div class="a" style="left:1142px;top:108px;width:3px;height:1px;background:#000"></div>
<div class="a" style="left:1143px;top:107px;width:1px;height:1px;background:#000"></div>
<div class="a" style="left:1140px;top:806px;width:7px;height:1px;background:#000"></div>
<div class="a" style="left:1141px;top:807px;width:5px;height:1px;background:#000"></div>
<div class="a" style="left:1142px;top:808px;width:3px;height:1px;background:#000"></div>
<div class="a" style="left:1143px;top:809px;width:1px;height:1px;background:#000"></div>
<!-- status bar -->
<div class="a" style="left:0px;top:816px;width:1152px;height:48px;background:#d4d0c8"></div>
<div class="a sunk" style="left:0px;top:818px;width:879px;height:18px;"></div>
<div class="a sunk" style="left:881px;top:818px;width:22px;height:18px;"></div>
<div class="a sunk" style="left:905px;top:818px;width:22px;height:18px;"></div>
<div class="a sunk" style="left:929px;top:818px;width:22px;height:18px;"></div>
<div class="a sunk" style="left:953px;top:818px;width:22px;height:18px;"></div>
<div class="a sunk" style="left:977px;top:818px;width:22px;height:18px;"></div>
<div class="a sunk" style="left:1001px;top:818px;width:150px;height:18px;"></div>
<svg class="a" style="left:2px;top:819px" width="16" height="16" viewBox="0 0 16 16"><path d="M4.500 .5h7l3 3v12h-10z" fill="#dfe7fb" stroke="#7a86c8" stroke-width="1"/>
<circle cx="6.600" cy="8.600" r="4.200" fill="none" stroke="#2a7ae0" stroke-width="2.300"/><rect x="3" y="7.800" width="8.500" height="1.800" fill="#2a7ae0"/><rect x="8" y="9.600" width="4" height="2" fill="#dfe7fb"/></svg>
<svg class="a" style="left:981px;top:819px" width="13" height="15" viewBox="0 0 13 15"><path d="M3.500 7V4.500a3 3 0 0 1 6 0V7" fill="none" stroke="#403808" stroke-width="1.600"/><rect x="1" y="6.500" width="11" height="8" fill="#e8d428" stroke="#403808" stroke-width="1"/><path d="M3 9.500h7M3 11.500h7" stroke="#807010" stroke-width=".8"/></svg>
<svg class="a" style="left:1003px;top:819px" width="17" height="16" viewBox="0 0 17 16"><circle cx="6" cy="5.500" r="5" fill="#38a048"/><path d="M2 4c2-2 5-2 7 0 1 2-1 4-3 5-2 0-4-2-4-5z" fill="#3870d8"/><rect x="5" y="4" width="11" height="8.500" fill="#a8c8f0" stroke="#5878b0" stroke-width="1"/><rect x="6.500" y="5.500" width="8" height="5.500" fill="#d8e8fc"/><path d="M8 13h5l1 2.500h-7z" fill="#8898b8"/></svg>
<div class="t" style="left:1022.70px;top:819px;font-size:11.3px;line-height:16px;letter-spacing:-0.361px;">Local intranet</div>
<!-- taskbar -->
<div class="a" style="left:0px;top:837px;width:1152px;height:1px;background:#fff"></div>
<div class="a btnw" style="left:2px;top:840px;width:52px;height:22px;"></div>
<svg class="a" style="left:4px;top:843px" width="16" height="14" viewBox="0 0 16 14"><path d="M2.200 1.200c1.700-1 3.400-.7 4.800.3L5.600 6.700c-1.400-1-3-1.100-4.700-.200z" fill="#f0622a"/><path d="M7.900 1.900c1.500.900 3.200 1.100 5.100 0l-1.400 5.200c-1.800 1-3.500.8-5-.1z" fill="#6cb82c"/>
<path d="M.7 7.500c1.700-.900 3.300-.700 4.700.2L4 12.800c-1.400-1-3-1.100-4.700-.200z" fill="#3d6be0"/><path d="M6.300 8.200c1.500.900 3.100 1.100 4.900.1l-1.300 5.100c-1.700.900-3.400.7-4.900-.2z" fill="#f7c21a"/></svg>
<div class="t" style="left:21.70px;top:843px;font-size:11.3px;line-height:16px;letter-spacing:0.506px;font-weight:bold;">Start</div>
<div class="a" style="left:61px;top:842px;width:3px;height:17px;background:#d4d0c8;box-shadow:inset 1px 1px 0 #fff,inset -1px -1px 0 #808080"></div>
<div class="a" style="left:399px;top:842px;width:3px;height:17px;background:#d4d0c8;box-shadow:inset 1px 1px 0 #fff,inset -1px -1px 0 #808080"></div>
<svg class="a" style="left:71px;top:843px" width="16" height="16" viewBox="0 0 16 16"><circle cx="8.300" cy="8.600" r="5.200" fill="none" stroke="#2a8cf0" stroke-width="3.400"/><circle cx="8.300" cy="8.600" r="5.200" fill="none" stroke="#1468d8" stroke-width="1.200"/><rect x="3" y="7.400" width="11" height="2.500" fill="#1c74e0"/><rect x="9.500" y="9.900" width="6.500" height="2.600" fill="#d4d0c8"/><path d="M.8 14.500c.6-6 7.500-13.500 14.500-12.500" fill="none" stroke="#58b4f8" stroke-width="1.400"/></svg>
<svg class="a" style="left:94px;top:843px" width="16" height="16" viewBox="0 0 16 16"><rect x=".5" y="1" width="14" height="14.500" rx="4" fill="#2a6ce0"/><rect x="2.500" y="3" width="9.500" height="10.500" rx="1.500" fill="#f8f0c8"/><circle cx="7" cy="8.500" r="2.800" fill="none" stroke="#4878c8" stroke-width="1.400"/><path d="M6.500 9.500l6-5" stroke="#202020" stroke-width="1.500"/><circle cx="13.800" cy="4.600" r="1.300" fill="#e85018"/></svg>
<svg class="a" style="left:117px;top:843px" width="16" height="16" viewBox="0 0 16 16"><rect x="0" y="0" width="16" height="16" fill="#3858c0"/><rect x="1.300" y="1.300" width="13.400" height="13.400" fill="#7898e8"/><rect x="2.600" y="2.600" width="10.800" height="10.800" fill="#fff" opacity=".78"/><text x="8" y="12.500" font-family="Liberation Sans" font-size="12" font-weight="bold" font-style="italic" text-anchor="middle" fill="#2848b0">W</text></svg>
<svg class="a" style="left:140px;top:843px" width="16" height="16" viewBox="0 0 16 16"><rect x="0" y="0" width="16" height="16" fill="#a03868"/><rect x="1.300" y="1.300" width="13.400" height="13.400" fill="#d898b8"/><rect x="2.600" y="2.600" width="10.800" height="10.800" fill="#fff" opacity=".78"/><circle cx="10.500" cy="5.500" r="3" fill="#b04878"/><path d="M9 7.500L3.500 13" stroke="#b04878" stroke-width="2.400"/></svg>
<svg class="a" style="left:163px;top:843px" width="16" height="16" viewBox="0 0 16 16"><rect x="0" y="0" width="16" height="16" fill="#2c7c34"/><rect x="1.300" y="1.300" width="13.400" height="13.400" fill="#84c08c"/><rect x="2.600" y="2.600" width="10.800" height="10.800" fill="#fff" opacity=".78"/><path d="M3.500 4l9 8M12.500 4l-9 8" stroke="#1c7c2c" stroke-width="2.600"/></svg>
<svg class="a" style="left:186px;top:843px" width="16" height="16" viewBox="0 0 16 16"><rect x="0" y="0" width="16" height="16" fill="#5838c0"/><rect x="1.300" y="1.300" width="13.400" height="13.400" fill="#9c88e8"/><rect x="2.600" y="2.600" width="10.800" height="10.800" fill="#fff" opacity=".78"/><path d="M4 12l8-8M12 4v4M12 4h-4M4 12v-4M4 12h4" stroke="#4828b0" stroke-width="1.800" fill="none"/></svg>
<svg class="a" style="left:209px;top:843px" width="16" height="16" viewBox="0 0 16 16"><rect x="0" y="0" width="16" height="16" fill="#c85018"/><rect x="1.300" y="1.300" width="13.400" height="13.400" fill="#f0a070"/><rect x="2.600" y="2.600" width="10.800" height="10.800" fill="#fff" opacity=".78"/><rect x="3" y="3" width="10" height="2" fill="#c85018"/><circle cx="7.500" cy="10" r="3.300" fill="#d86028"/><rect x="12" y="7" width="1.500" height="1.500" fill="#c85018"/><rect x="12" y="10" width="1.500" height="1.500" fill="#c85018"/></svg>
<svg class="a" style="left:232px;top:843px" width="16" height="16" viewBox="0 0 16 16"><rect x=".5" y="2.500" width="15" height="12" fill="#fff" stroke="#000" stroke-width="1"/><rect x="1" y="3" width="14" height="3" fill="#0a246a"/><rect x="1" y="14" width="15" height="1.500" fill="#000"/><rect x="8" y="4" width="1.500" height="1" fill="#fff"/><rect x="10.500" y="4" width="1.500" height="1" fill="#fff"/><rect x="13" y="4" width="1.500" height="1" fill="#fff"/></svg>
<svg class="a" style="left:255px;top:843px" width="16" height="16" viewBox="0 0 16 16"><rect x="0" y="0" width="16" height="16" fill="#28787c"/><rect x="1.300" y="1.300" width="13.400" height="13.400" fill="#78b8bc"/><rect x="2.600" y="2.600" width="10.800" height="10.800" fill="#fff" opacity=".78"/><text x="8" y="13" font-family="Liberation Serif" font-size="13" font-weight="bold" text-anchor="middle" fill="#186870">P</text></svg>
<svg class="a" style="left:278px;top:843px" width="16" height="16" viewBox="0 0 16 16"><rect x="0" y="0" width="16" height="16" fill="#3850c8"/><rect x="1.300" y="1.300" width="13.400" height="13.400" fill="#8098f0"/><rect x="2.600" y="2.600" width="10.800" height="10.800" fill="#fff" opacity=".78"/><rect x="3.500" y="3" width="4.500" height="4.500" fill="#fff" stroke="#2840b0" stroke-width="1"/><path d="M5.700 7.500V12h4" stroke="#2840b0" stroke-width="1.200" fill="none"/><path d="M11.500 3v6" stroke="#2840b0" stroke-width="1.200" stroke-dasharray="1.500 1"/><rect x="9.700" y="10.200" width="3.600" height="3.600" transform="rotate(45 11.500 12)" fill="#fff" stroke="#2840b0" stroke-width="1"/></svg>
<svg class="a" style="left:301px;top:843px" width="16" height="16" viewBox="0 0 16 16"><rect x="1" y="1" width="14" height="14" rx="3" fill="#d8b820" stroke="#907008" stroke-width="1"/><circle cx="6" cy="7.500" r="4.300" fill="#f8e868" stroke="#907008" stroke-width=".9"/><circle cx="10.500" cy="10" r="4.300" fill="#f8e868" stroke="#907008" stroke-width=".9"/><circle cx="10.500" cy="10" r="1.200" fill="#907008"/></svg>
<svg class="a" style="left:324px;top:843px" width="16" height="16" viewBox="0 0 16 16"><rect x="1.500" y=".5" width="13" height="15" fill="#fff" stroke="#000" stroke-width="1.200"/><rect x="8" y="1" width="6.500" height="3" fill="#e81828"/><path d="M4 4v8h6M4 8h6M7 8v4" stroke="#000" stroke-width="1.100" fill="none"/><rect x="2.500" y="2" width="2.600" height="2.600" fill="#18c0e0" stroke="#000" stroke-width=".6"/><rect x="5.500" y="6.500" width="2.600" height="2.600" fill="#e0e018" stroke="#000" stroke-width=".6"/><rect x="9.500" y="6.700" width="2.600" height="2.600" fill="#e82020" stroke="#000" stroke-width=".6"/><rect x="9.500" y="10.800" width="2.600" height="2.600" fill="#18b030" stroke="#000" stroke-width=".6"/></svg>
<svg class="a" style="left:347px;top:843px" width="16" height="16" viewBox="0 0 16 16"><circle cx="8" cy="8" r="7" fill="#fff"/><path d="M8 1a7 7 0 0 1 7 7h-4a3 3 0 0 0-3-3z" fill="#58b030"/><path d="M15 8a7 7 0 0 1-7 7v-4a3 3 0 0 0 3-3z" fill="#f0b818"/><path d="M8 15a7 7 0 0 1-7-7h4a3 3 0 0 0 3 3z" fill="#2868d8"/><path d="M1 8a7 7 0 0 1 7-7v4a3 3 0 0 0-3 3z" fill="#e85018"/><circle cx="8" cy="8" r="4.300" fill="#fff" stroke="#a0a0a0" stroke-width=".5"/><path d="M6.500 5.300L11 8l-4.500 2.700z" fill="#000"/></svg>
<svg class="a" style="left:370px;top:843px" width="16" height="16" viewBox="0 0 16 16"><rect x=".7" y=".7" width="14.600" height="14.600" fill="#f8d8a0" stroke="#e89018" stroke-width="1.400"/><circle cx="8" cy="8" r="4.600" fill="#fff0d0" stroke="#c87810" stroke-width="1.300"/><path d="M8 5v3h2.500" stroke="#c87810" stroke-width="1.100" fill="none"/></svg>
<div class="a btnw" style="left:406px;top:840px;width:107px;height:22px;"></div>
<svg class="a" style="left:410px;top:843px" width="16" height="16" viewBox="0 0 16 16"><rect x=".7" y=".7" width="14.600" height="14.600" fill="#f8d8a0" stroke="#e89018" stroke-width="1.400"/><circle cx="8" cy="8" r="4.600" fill="#fff0d0" stroke="#c87810" stroke-width="1.300"/><path d="M8 5v3h2.500" stroke="#c87810" stroke-width="1.100" fill="none"/></svg>
<div class="t" style="left:428.70px;top:843px;font-size:11.3px;line-height:16px;letter-spacing:0.029px;">Inbox - Micro...</div>
<div class="a btnw" style="left:516px;top:840px;width:107px;height:22px;"></div>
<svg class="a" style="left:520px;top:843px" width="16" height="16" viewBox="0 0 16 16"><path d="M3.500 .5h8.500l3.500 3.500v11.500h-12z" fill="#f6f6ec" stroke="#707070"/><path d="M12 .5v3.500h3.500" fill="#fff" stroke="#505050"/>
<circle cx="5.800" cy="7.600" r="3.500" fill="none" stroke="#2456e0" stroke-width="2.100"/><rect x="2.300" y="6.800" width="7.500" height="1.700" fill="#2456e0"/><rect x="6.500" y="8.500" width="4" height="1.700" fill="#f6f6ec"/>
<path d="M.6 11c.3-4 3.600-8 8-8.500" fill="none" stroke="#f0c040" stroke-width="1.100"/><path d="M1 12.500l2 2" stroke="#2456e0" stroke-width="1.200"/></svg>
<div class="t" style="left:539.70px;top:843px;font-size:11.3px;line-height:16px;letter-spacing:-0.355px;">ROCIS Login ...</div>
<div class="a chk" style="left:626px;top:840px;width:107px;height:22px;box-shadow:inset -1px -1px 0 #fff,inset 1px 1px 0 #404040,inset -2px -2px 0 #d4d0c8,inset 2px 2px 0 #808080"></div>
<svg class="a" style="left:630px;top:844px" width="16" height="16" viewBox="0 0 16 16"><path d="M3.500 .5h8.500l3.500 3.500v11.500h-12z" fill="#f6f6ec" stroke="#707070"/><path d="M12 .5v3.500h3.500" fill="#fff" stroke="#505050"/>
<circle cx="5.800" cy="7.600" r="3.500" fill="none" stroke="#2456e0" stroke-width="2.100"/><rect x="2.300" y="6.800" width="7.500" height="1.700" fill="#2456e0"/><rect x="6.500" y="8.500" width="4" height="1.700" fill="#f6f6ec"/>
<path d="M.6 11c.3-4 3.600-8 8-8.500" fill="none" stroke="#f0c040" stroke-width="1.100"/><path d="M1 12.500l2 2" stroke="#2456e0" stroke-width="1.200"/></svg>
<div class="t" style="left:651.70px;top:844px;font-size:11.3px;line-height:16px;letter-spacing:0.216px;font-weight:bold;">Traveler Re...</div>
<div class="a btnw" style="left:736px;top:840px;width:107px;height:22px;"></div>
<svg class="a" style="left:740px;top:843px" width="16" height="16" viewBox="0 0 16 16"><path d="M.7 3.500c0-1 .5-1.500 1.500-1.500h4l1.500 2h6.500c1 0 1.300.5 1.300 1.500v7c0 1-.5 1.500-1.500 1.500h-12c-.8 0-1.300-.5-1.300-1.500z" fill="#f8d860" stroke="#a07808" stroke-width="1"/><path d="M1.500 6.500h13" stroke="#fcecA0" stroke-width="1.500"/></svg>
<div class="t" style="left:759.70px;top:843px;font-size:11.3px;line-height:16px;letter-spacing:0.095px;">O:\Informatio...</div>
<div class="a btnw" style="left:846px;top:840px;width:107px;height:22px;"></div>
<svg class="a" style="left:850px;top:843px" width="16" height="16" viewBox="0 0 16 16"><path d="M3.500 .5h8l4 4v11h-12z" fill="#fff" stroke="#5060b0" stroke-width="1"/><path d="M5 7h9M5 9h9M5 11h9M5 13h9" stroke="#8090c8" stroke-width=".8"/><rect x="0" y="2" width="10" height="9" fill="#2848b0"/><text x="5" y="9.500" font-family="Liberation Sans" font-size="8.500" font-weight="bold" font-style="italic" text-anchor="middle" fill="#fff">W</text></svg>
<div class="t" style="left:870.70px;top:843px;font-size:11.3px;line-height:16px;letter-spacing:-0.197px;">Doc7.doc - Mi...</div>
<div class="a sunk" style="left:962px;top:840px;width:187px;height:22px;"></div>
<svg class="a" style="left:965px;top:843px" width="16" height="16" viewBox="0 0 16 16"><rect x=".7" y=".7" width="14.600" height="14.600" fill="#f8d8a0" stroke="#e89018" stroke-width="1.400"/><circle cx="8" cy="8" r="4.600" fill="#fff0d0" stroke="#c87810" stroke-width="1.300"/><path d="M8 5v3h2.500" stroke="#c87810" stroke-width="1.100" fill="none"/></svg>
<svg class="a" style="left:983px;top:843px" width="16" height="16" viewBox="0 0 16 16"><circle cx="8" cy="8" r="7" fill="#fff" stroke="#000" stroke-width="1.300"/><rect x="7" y="3.500" width="2" height="6" fill="#000"/><rect x="7" y="10.800" width="2" height="2" fill="#000"/></svg>
<svg class="a" style="left:1001px;top:843px" width="18" height="16" viewBox="0 0 18 16"><path d="M10 1l6 6M16 1l-6 6" stroke="#e82020" stroke-width="1.800"/><circle cx="4.500" cy="11" r="3.300" fill="#f8e020" stroke="#000" stroke-width="1"/><circle cx="3.800" cy="11" r="1" fill="#000"/><path d="M7.500 9.500h9v2h-1.500v2h-2v-2h-1.500v1.500h-1.500v-1.500H7.800z" fill="#f8e020" stroke="#000" stroke-width=".9"/></svg>
<svg class="a" style="left:1019px;top:843px" width="17" height="16" viewBox="0 0 17 16"><path d="M1 9l8-8 7 7-8 8z" fill="#e8d028" stroke="#000" stroke-width="1"/><path d="M4 9l5-5M6 11l5-5M8 13l5-5" stroke="#000" stroke-width=".8"/><path d="M1 9l3 6 4 1z" fill="#f8f0a0" stroke="#000" stroke-width=".8"/></svg>
<svg class="a" style="left:1037px;top:843px" width="17" height="16" viewBox="0 0 17 16"><rect x="0" y="0" width="17" height="16" fill="#10107c"/><rect x="0" y="0" width="2" height="16" fill="#a01830"/><rect x="4.500" y="3" width="9.500" height="10.500" rx="1.500" fill="#f0d818" stroke="#000" stroke-width=".8"/><path d="M7.700 3v10.500M10.800 3v10.500M4.500 6.500h9.500M4.500 10h9.500" stroke="#000" stroke-width=".9"/></svg>
<svg class="a" style="left:1056px;top:843px" width="16" height="16" viewBox="0 0 16 16"><rect x=".5" y=".5" width="15" height="13" fill="#50c8e0" stroke="#000" stroke-width="1"/><circle cx="8" cy="7" r="5.300" fill="#e0f4fc" stroke="#2050a0" stroke-width="1.200"/><path d="M4.500 10.500l7-7M6 5l4 4" stroke="#2050a0" stroke-width="1.200"/><rect x="1" y="13.500" width="14" height="2.500" fill="#209088"/></svg>
<svg class="a" style="left:1073px;top:843px" width="17" height="16" viewBox="0 0 17 16"><path d="M2 1h11l3 12-10 2z" fill="#1828b0" stroke="#000050" stroke-width="1"/><path d="M2 1L.8 3.500 5 15.500 6 15z" fill="#4860d8" stroke="#000050" stroke-width=".7"/><path d="M5 15.500l11-2.200" stroke="#c8d0f0" stroke-width="1.400"/><circle cx="9" cy="6" r=".8" fill="#a0b0ff"/><circle cx="11.500" cy="9" r=".8" fill="#a0b0ff"/><circle cx="7.500" cy="10" r=".8" fill="#a0b0ff"/></svg>
<div class="t" style="left:1099.70px;top:843px;font-size:11.3px;line-height:16px;letter-spacing:-0.443px;">9:42 AM</div>
</div>
</body>
</html>
